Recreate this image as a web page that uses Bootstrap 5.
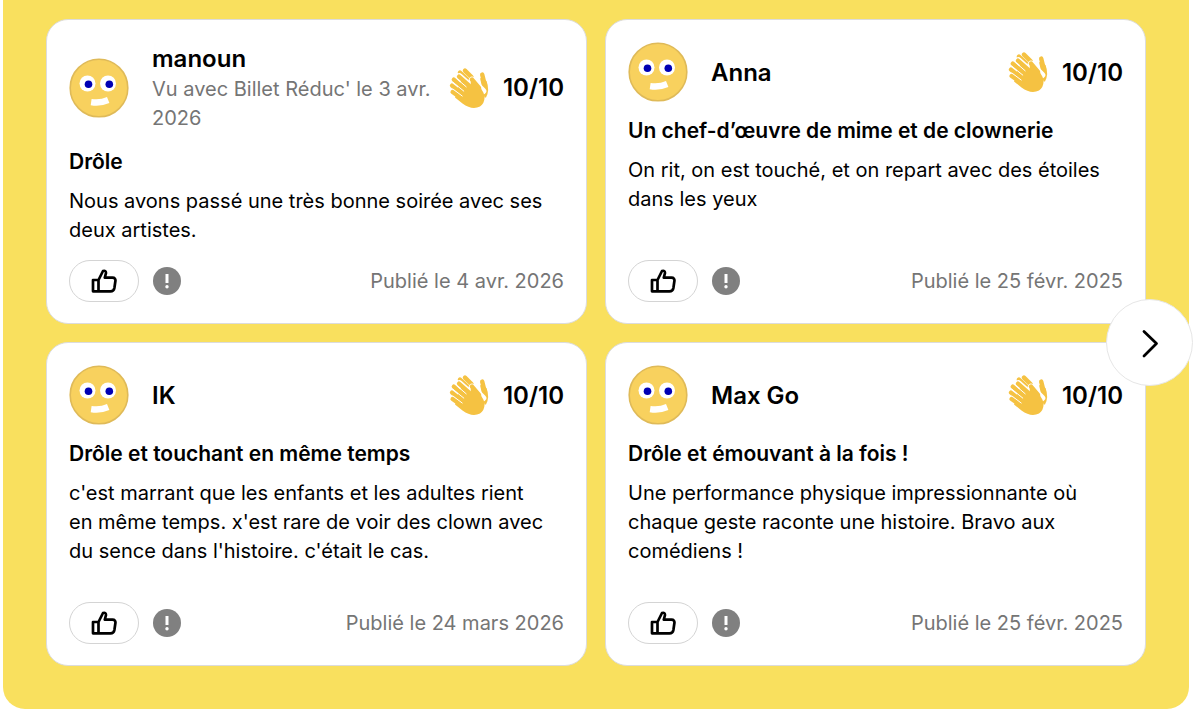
<!DOCTYPE html>
<html lang="fr">
<head>
<meta charset="utf-8">
<meta name="viewport" content="width=device-width, initial-scale=1">
<title>Avis des spectateurs</title>
<link href="https://cdn.jsdelivr.net/npm/bootstrap@5.3.0/dist/css/bootstrap.min.css" rel="stylesheet">
<style>
  body { font-family: Inter, "Liberation Sans", sans-serif; font-size: 20px; line-height: 29px; color: #000; background: #fff; }
  .reviews-wrap { margin: 0 11px 0 3px; }
  .reviews { background: #f9e05e; border-radius: 0 0 22px 22px; padding: 19px 43px 43px; }
  .review-grid { display: grid; grid-template-columns: 1fr 1fr; grid-template-rows: minmax(305px, auto) minmax(324px, auto); gap: 18px; }
  .review { --bs-card-border-color: #dcdcdc; --bs-card-border-radius: 22px; --bs-card-inner-border-radius: 21px; color: #000; }
  .review .card-body { padding: 22px 22px 21px; }
  .review-head { gap: 8px; min-height: 60px; margin-bottom: 14px; }
  .avatar { width: 60px; height: 60px; margin-right: 15px; }
  .name { font-size: 24px; line-height: 33px; font-weight: 600; }
  .muted { color: #757575; }
  .clap { width: 42px; height: 42px; }
  .score { font-size: 24px; font-weight: 600; }
  .rating { gap: 13px; }
  .review-title { font-size: 21px; line-height: 30px; font-weight: 600; margin-bottom: 10px; }
  .review-text { margin: 0; padding-right: 15px; }
  .review-foot { gap: 14px; padding-top: 14px; }
  .like { width: 70px; height: 42px; border: 1px solid #d4d4d4; background: #fff; }
  .report { width: 28px; height: 28px; background: #808080; }
  .next { width: 87px; height: 87px; right: -4px; top: 299px; border: 1px solid #e6e6e6; background: #fff; }
  @media (max-width: 800px) { .review-grid { grid-template-columns: 1fr; grid-template-rows: none; } }
</style>
</head>
<body>
<svg class="d-none" aria-hidden="true">
  <symbol id="face" viewBox="0 0 60 60">
    <circle cx="30" cy="30" r="28.8" fill="#f8d15e" stroke="#dfba58" stroke-width="1.6"/>
    <circle cx="18.5" cy="25.5" r="8" fill="#fff"/><circle cx="39" cy="25.5" r="8" fill="#fff"/>
    <circle cx="19.5" cy="26.3" r="3.8" fill="#0000b4"/><circle cx="40.3" cy="26.3" r="3.8" fill="#0000b4"/>
    <path d="M22.6 41 Q31 42.3 38 39 L40.4 45 Q31 49 21.7 47.2Z" fill="#fff"/>
  </symbol>
  <symbol id="clap" viewBox="0 0 42 42">
    <g stroke="#f5c242" stroke-linecap="round" fill="none" stroke-width="4.4">
      <path d="M34.2 7.6 L36.6 17"/>
      <path d="M17 3.6 L23.5 10 M12 5.6 L20 13"/>
    </g>
    <path d="M32 11 L38.5 14 Q42 23 38 30.5 L36.5 30.5Z" fill="#f5c242"/>
    <g stroke="#fff" stroke-linecap="round" fill="none">
      <path d="M11.5 9.5 L21 18" stroke-width="6.4"/>
      <path d="M24 13 L35 24" stroke-width="6.6"/>
    </g>
    <g stroke="#f5c242" stroke-linecap="round" fill="none" stroke-width="4.3">
      <path d="M11 9.6 L24 21 M5.8 12.6 L20 25 M4 18.6 L17 29 M4.6 25 L16 33"/>
      <path d="M24 12.6 L31 21" stroke-width="4.6"/>
    </g>
    <path d="M14 12.4 L22 18.2 Q23 19 22.7 16 L23 13 Q31 16 35.6 26 Q38.5 35 32 39.5 Q24 43.5 14.5 36.5 L7 30.4 L9 26 L10 20Z" fill="#f5c242"/>
    <path d="M8.8 11.7 L18.2 19.8 M4.9 15.3 L15.8 24.1 M4.8 21.9 L14.2 29" stroke="#fff" stroke-width="1" stroke-linecap="round"/>
  </symbol>
  <symbol id="thumb" viewBox="0 0 26 26">
    <path d="M2 12 H7.5 V23.3 H2Z M7.5 12 L12 3 Q15 2 15 5 L13.8 9.7 H21.5 Q24.8 9.7 24.4 13 L23.4 20 Q22.8 23.3 19.5 23.3 H7.5" fill="none" stroke="#000" stroke-width="2.7" stroke-linejoin="round"/>
  </symbol>
  <symbol id="bang" viewBox="0 0 28 28">
    <path d="M14 7 V16" stroke="#fff" stroke-width="3"/><circle cx="14" cy="19.7" r="1.7" fill="#fff"/>
  </symbol>
</svg>
<main class="reviews-wrap position-relative">
  <section class="reviews" aria-label="Avis">
    <div class="review-grid">
      <article class="card review"><div class="card-body d-flex flex-column">
        <header class="review-head d-flex align-items-center">
          <svg class="avatar flex-shrink-0"><use href="#face"/></svg>
          <div class="flex-grow-1"><div class="name">manoun</div><div class="muted">Vu avec Billet Réduc' le 3 avr. 2026</div></div>
          <div class="rating d-flex align-items-center"><svg class="clap"><use href="#clap"/></svg><span class="score">10/10</span></div>
        </header>
        <h3 class="review-title">Drôle</h3>
        <p class="review-text">Nous avons passé une très bonne soirée avec ses deux artistes.</p>
        <footer class="review-foot d-flex align-items-center mt-auto">
          <button class="btn like rounded-pill p-0 d-flex align-items-center justify-content-center" aria-label="Utile"><svg width="26" height="26"><use href="#thumb"/></svg></button>
          <button class="btn report rounded-circle p-0 border-0 d-flex" aria-label="Signaler"><svg width="28" height="28"><use href="#bang"/></svg></button>
          <span class="muted ms-auto">Publié le 4 avr. 2026</span>
        </footer>
      </div></article>
      <article class="card review"><div class="card-body d-flex flex-column">
        <header class="review-head d-flex align-items-center">
          <svg class="avatar flex-shrink-0"><use href="#face"/></svg>
          <div class="flex-grow-1"><div class="name">Anna</div></div>
          <div class="rating d-flex align-items-center"><svg class="clap"><use href="#clap"/></svg><span class="score">10/10</span></div>
        </header>
        <h3 class="review-title">Un chef-d’œuvre de mime et de clownerie</h3>
        <p class="review-text">On rit, on est touché, et on repart avec des étoiles dans les yeux</p>
        <footer class="review-foot d-flex align-items-center mt-auto">
          <button class="btn like rounded-pill p-0 d-flex align-items-center justify-content-center" aria-label="Utile"><svg width="26" height="26"><use href="#thumb"/></svg></button>
          <button class="btn report rounded-circle p-0 border-0 d-flex" aria-label="Signaler"><svg width="28" height="28"><use href="#bang"/></svg></button>
          <span class="muted ms-auto">Publié le 25 févr. 2025</span>
        </footer>
      </div></article>
      <article class="card review"><div class="card-body d-flex flex-column">
        <header class="review-head d-flex align-items-center">
          <svg class="avatar flex-shrink-0"><use href="#face"/></svg>
          <div class="flex-grow-1"><div class="name">IK</div></div>
          <div class="rating d-flex align-items-center"><svg class="clap"><use href="#clap"/></svg><span class="score">10/10</span></div>
        </header>
        <h3 class="review-title">Drôle et touchant en même temps</h3>
        <p class="review-text">c'est marrant que les enfants et les adultes rient en même temps. x'est rare de voir des clown avec du sence dans l'histoire. c'était le cas.</p>
        <footer class="review-foot d-flex align-items-center mt-auto">
          <button class="btn like rounded-pill p-0 d-flex align-items-center justify-content-center" aria-label="Utile"><svg width="26" height="26"><use href="#thumb"/></svg></button>
          <button class="btn report rounded-circle p-0 border-0 d-flex" aria-label="Signaler"><svg width="28" height="28"><use href="#bang"/></svg></button>
          <span class="muted ms-auto">Publié le 24 mars 2026</span>
        </footer>
      </div></article>
      <article class="card review"><div class="card-body d-flex flex-column">
        <header class="review-head d-flex align-items-center">
          <svg class="avatar flex-shrink-0"><use href="#face"/></svg>
          <div class="flex-grow-1"><div class="name">Max Go</div></div>
          <div class="rating d-flex align-items-center"><svg class="clap"><use href="#clap"/></svg><span class="score">10/10</span></div>
        </header>
        <h3 class="review-title">Drôle et émouvant à la fois !</h3>
        <p class="review-text">Une performance physique impressionnante où chaque geste raconte une histoire. Bravo aux comédiens !</p>
        <footer class="review-foot d-flex align-items-center mt-auto">
          <button class="btn like rounded-pill p-0 d-flex align-items-center justify-content-center" aria-label="Utile"><svg width="26" height="26"><use href="#thumb"/></svg></button>
          <button class="btn report rounded-circle p-0 border-0 d-flex" aria-label="Signaler"><svg width="28" height="28"><use href="#bang"/></svg></button>
          <span class="muted ms-auto">Publié le 25 févr. 2025</span>
        </footer>
      </div></article>
    </div>
  </section>
  <button class="btn next position-absolute rounded-circle p-0 d-flex align-items-center justify-content-center" aria-label="Suivant">
    <svg width="30" height="30" viewBox="0 0 30 30"><path d="M9 3.5 L21.5 15.5 L9 28" fill="none" stroke="#000" stroke-width="2.8" stroke-linecap="round" stroke-linejoin="round"/></svg>
  </button>
</main>
<script src="https://cdn.jsdelivr.net/npm/bootstrap@5.3.0/dist/js/bootstrap.bundle.min.js"></script>
</body>
</html>
